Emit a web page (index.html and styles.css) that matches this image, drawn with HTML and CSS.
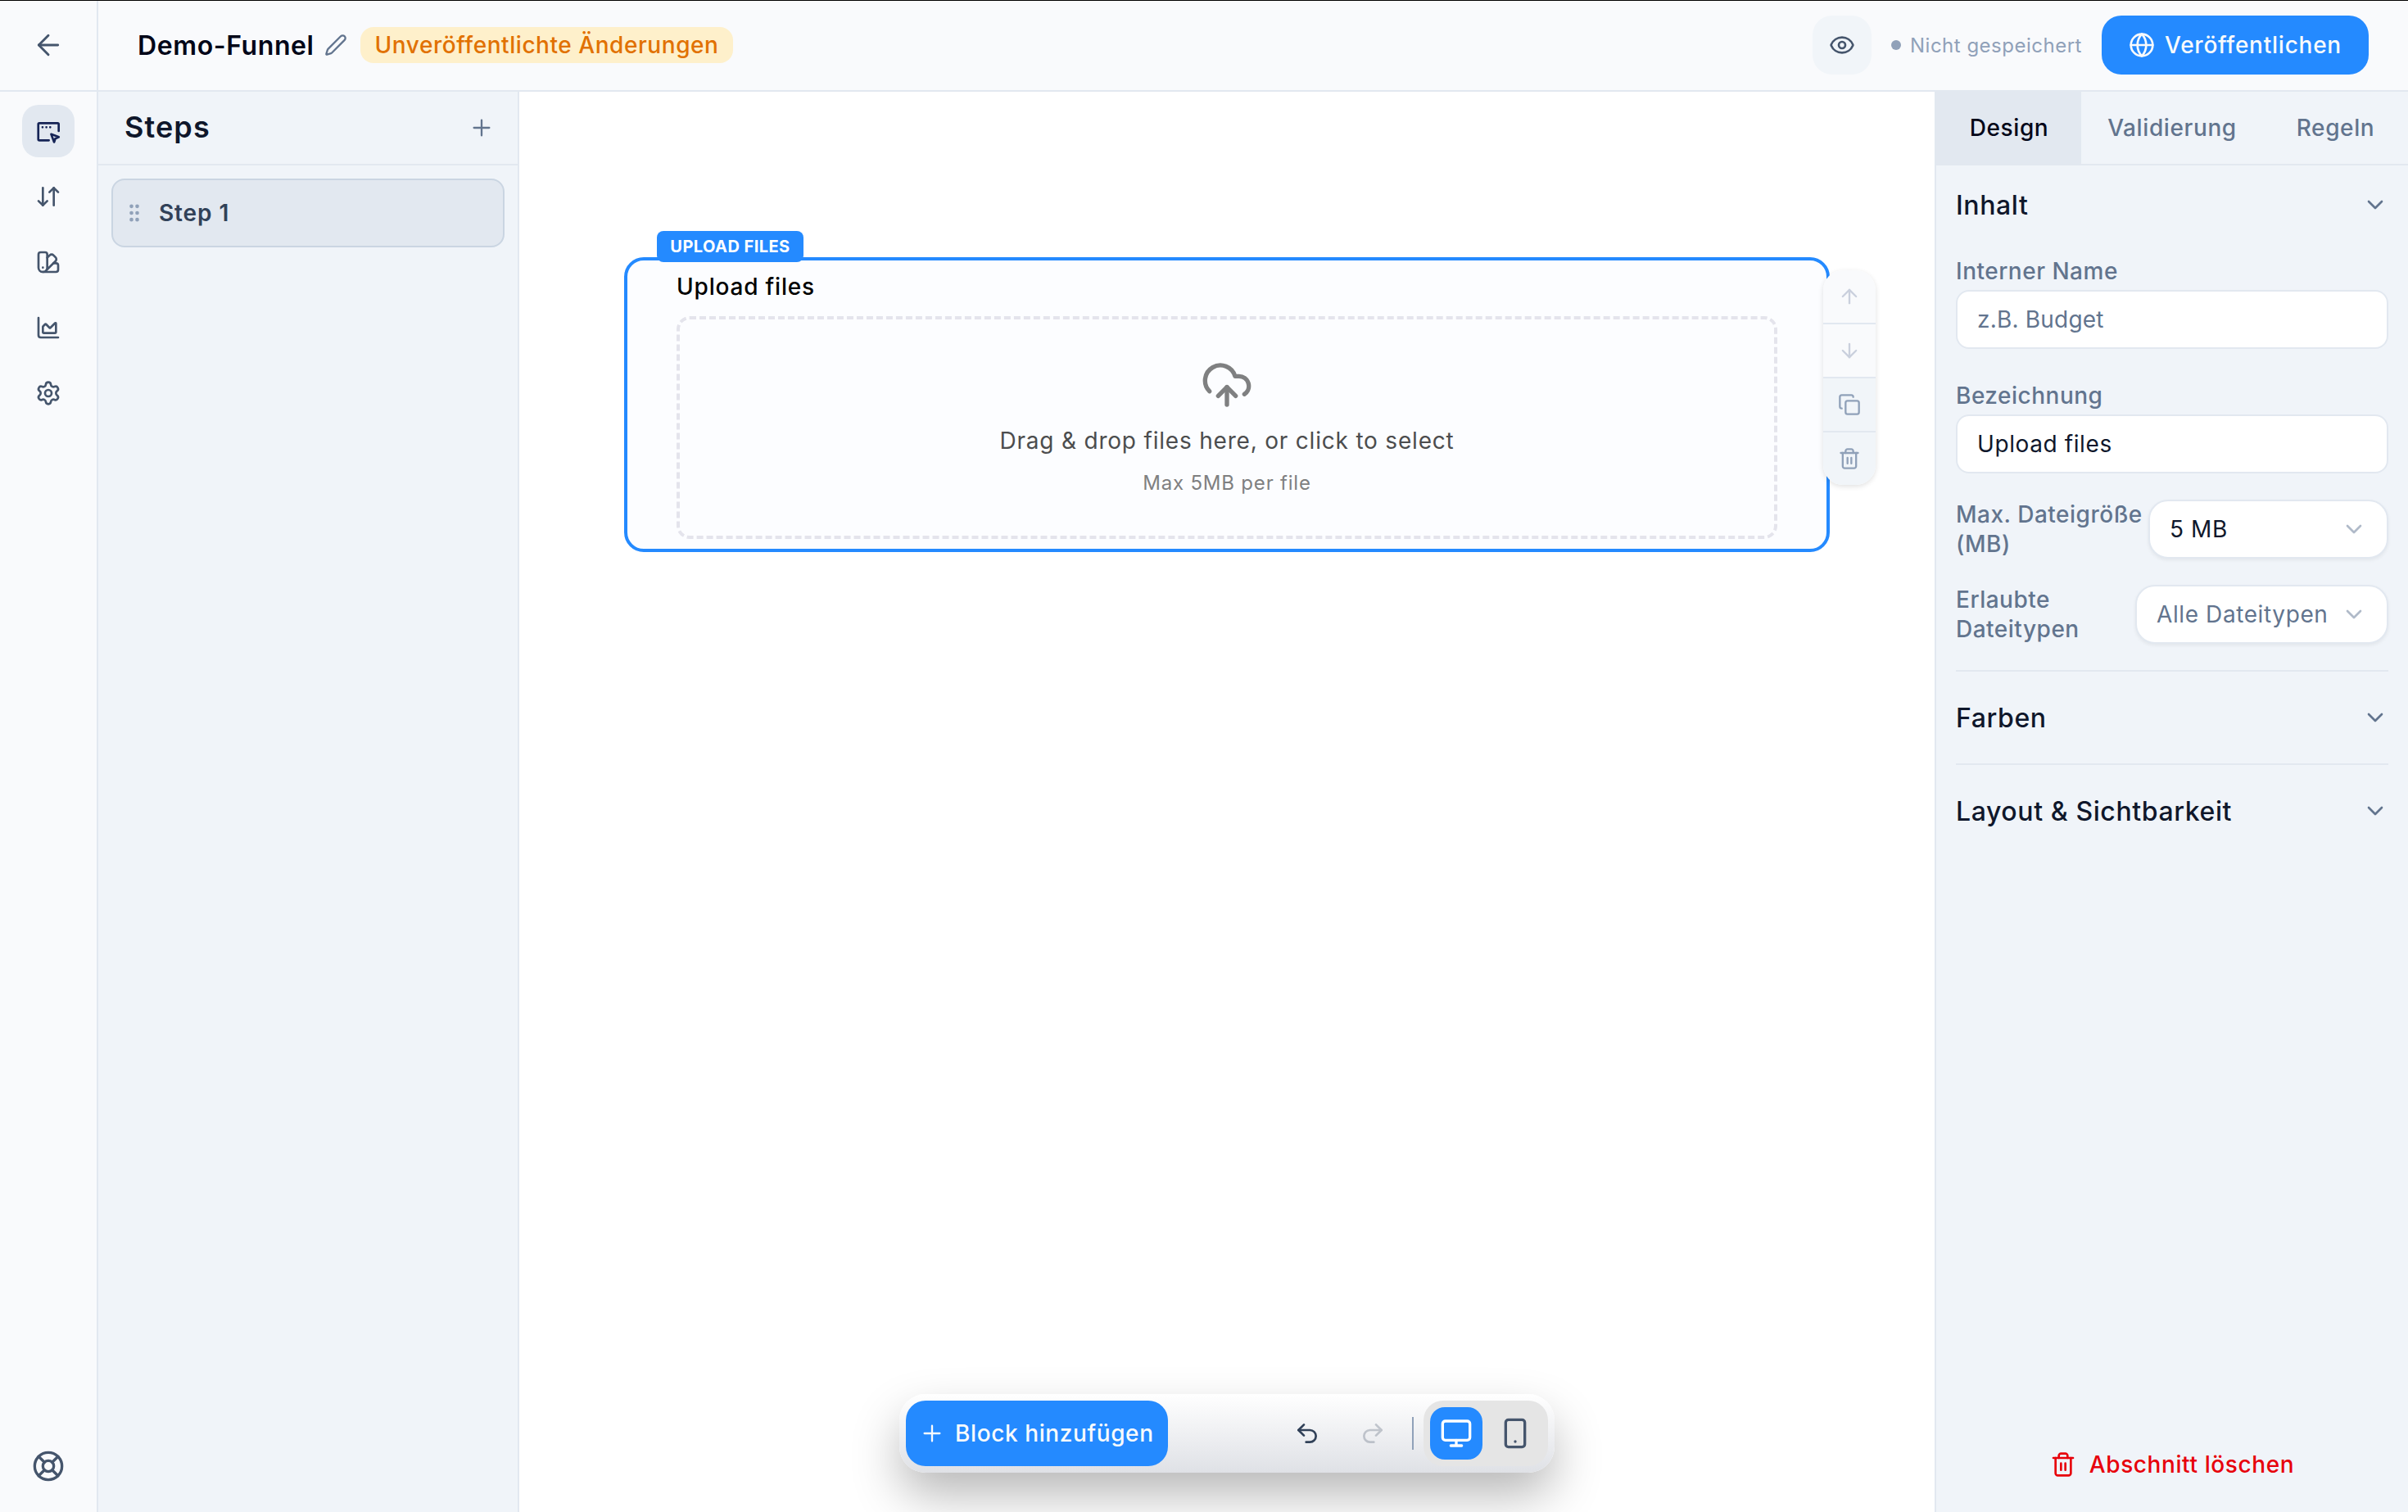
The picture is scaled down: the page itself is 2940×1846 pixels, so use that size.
FILE: index.html
```
<!DOCTYPE html>
<html lang="de">
<head>
  <meta charset="UTF-8">
  <title>Demo-Funnel</title>
  <link rel="stylesheet" href="styles.css">
</head>
<body>

  <header class="topbar">
    <div class="back">
      <svg class="icon i40 thin" viewBox="0 0 24 24"><path d="m12 19-7-7 7-7"/><path d="M19 12H5"/></svg>
    </div>
    <div class="topbar-main">
      <div class="funnel">
        <h1>Demo-Funnel</h1>
        <svg class="icon i28 pen" viewBox="0 0 24 24"><path d="M21.174 6.812a1 1 0 0 0-3.986-3.987L3.842 16.174a2 2 0 0 0-.5.83l-1.321 4.352a.5.5 0 0 0 .623.622l4.353-1.32a2 2 0 0 0 .83-.497z"/></svg>
        <span class="badge">Unveröffentlichte Änderungen</span>
      </div>
      <div class="actions">
        <button class="preview">
          <svg class="icon i32" viewBox="0 0 24 24"><path d="M2.062 12.348a1 1 0 0 1 0-.696 10.75 10.75 0 0 1 19.876 0 1 1 0 0 1 0 .696 10.75 10.75 0 0 1-19.876 0"/><circle cx="12" cy="12" r="3"/></svg>
        </button>
        <span class="status"><i class="dot"></i>Nicht gespeichert</span>
        <button class="publish">
          <svg class="icon i32" viewBox="0 0 24 24"><circle cx="12" cy="12" r="10"/><path d="M12 2a14.5 14.5 0 0 0 0 20 14.5 14.5 0 0 0 0-20"/><path d="M2 12h20"/></svg>
          Veröffentlichen
        </button>
      </div>
    </div>
  </header>

  <div class="workspace">

    <nav class="rail">
      <a class="rail-item active">
        <svg class="icon i32" viewBox="0 0 24 24"><path d="M21.5 12V5.8a1 1 0 0 0-1-1H3.8a1 1 0 0 0-1 1v13.7a1 1 0 0 0 1 1h8.7"/><path d="M6.7 8.5h.01M10.2 8.5h.01M13.7 8.5h.01"/><path d="m14.6 14.9 7 2.5-3.2 1.5-1.1 3.2z"/></svg>
      </a>
      <a class="rail-item">
        <svg class="icon i32" viewBox="0 0 24 24"><path d="m3 16 4 4 4-4"/><path d="M7 20V4"/><path d="m21 8-4-4-4 4"/><path d="M17 4v16"/></svg>
      </a>
      <a class="rail-item">
        <svg class="icon i32" viewBox="0 0 24 24"><path d="M11 17a4 4 0 0 1-8 0V5a2 2 0 0 1 2-2h4a2 2 0 0 1 2 2Z"/><path d="M16.7 13H19a2 2 0 0 1 2 2v4a2 2 0 0 1-2 2H7"/><path d="M7 17h.01"/><path d="m11 8 2.3-2.3a2.4 2.4 0 0 1 3.404.004L18.6 7.6a2.4 2.4 0 0 1 .026 3.434L9.9 19.8"/></svg>
      </a>
      <a class="rail-item">
        <svg class="icon i32" viewBox="0 0 24 24"><path d="M3 3v16a2 2 0 0 0 2 2h16"/><path d="M7 11.207a.5.5 0 0 1 .146-.353l2-2a.5.5 0 0 1 .708 0l3.292 3.292a.5.5 0 0 0 .708 0l4.292-4.292a.5.5 0 0 1 .854.353V16a1 1 0 0 1-1 1H8a1 1 0 0 1-1-1z"/></svg>
      </a>
      <a class="rail-item">
        <svg class="icon i32" viewBox="0 0 24 24"><path d="M9.671 4.136a2.34 2.34 0 0 1 4.659 0 2.34 2.34 0 0 0 3.319 1.915 2.34 2.34 0 0 1 2.33 4.033 2.34 2.34 0 0 0 0 3.831 2.34 2.34 0 0 1-2.33 4.033 2.34 2.34 0 0 0-3.319 1.915 2.34 2.34 0 0 1-4.659 0 2.34 2.34 0 0 0-3.32-1.915 2.34 2.34 0 0 1-2.33-4.033 2.34 2.34 0 0 0 0-3.831A2.34 2.34 0 0 1 6.35 6.051a2.34 2.34 0 0 0 3.319-1.915"/><circle cx="12" cy="12" r="3"/></svg>
      </a>
      <a class="rail-item help">
        <svg class="icon i40" viewBox="0 0 24 24"><circle cx="12" cy="12" r="10"/><path d="m4.93 4.93 4.24 4.24M14.83 9.17l4.24-4.24M14.83 14.83l4.24 4.24M9.17 14.83l-4.24 4.24"/><circle cx="12" cy="12" r="4"/></svg>
      </a>
    </nav>

    <aside class="steps">
      <div class="steps-head">
        <h2>Steps</h2>
        <svg class="icon i32 thin" viewBox="0 0 24 24"><path d="M5 12h14M12 5v14"/></svg>
      </div>
      <div class="step">
        <svg class="icon i28 grip" viewBox="0 0 24 24"><circle cx="9" cy="12" r="1"/><circle cx="9" cy="5" r="1"/><circle cx="9" cy="19" r="1"/><circle cx="15" cy="12" r="1"/><circle cx="15" cy="5" r="1"/><circle cx="15" cy="19" r="1"/></svg>
        Step 1
      </div>
    </aside>

    <main class="canvas">
      <section class="block">
        <span class="block-tag">UPLOAD FILES</span>
        <div class="block-title">Upload files</div>
        <div class="dropzone">
          <svg class="icon i64" viewBox="0 0 24 24"><path d="M12 13v8"/><path d="M4 14.899A7 7 0 1 1 15.71 8h1.79a4.5 4.5 0 0 1 2.5 8.242"/><path d="m8 17 4-4 4 4"/></svg>
          <p class="drop-text">Drag &amp; drop files here, or click to select</p>
          <p class="drop-hint">Max 5MB per file</p>
        </div>
        <div class="block-tools">
          <button class="tool disabled"><svg class="icon i28" viewBox="0 0 24 24"><path d="m5 12 7-7 7 7"/><path d="M12 19V5"/></svg></button>
          <button class="tool disabled"><svg class="icon i28" viewBox="0 0 24 24"><path d="M12 5v14"/><path d="m19 12-7 7-7-7"/></svg></button>
          <button class="tool"><svg class="icon i28" viewBox="0 0 24 24"><rect width="14" height="14" x="8" y="8" rx="2"/><path d="M4 16c-1.1 0-2-.9-2-2V4c0-1.1.9-2 2-2h10c1.1 0 2 .9 2 2"/></svg></button>
          <button class="tool"><svg class="icon i28" viewBox="0 0 24 24"><path d="M3 6h18"/><path d="M19 6v14c0 1-1 2-2 2H7c-1 0-2-1-2-2V6"/><path d="M8 6V4c0-1 1-2 2-2h4c1 0 2 1 2 2v2"/><path d="M10 11v6M14 11v6"/></svg></button>
        </div>
      </section>

      <div class="dock">
        <button class="add-block">
          <svg class="icon i32 thin" viewBox="0 0 24 24"><path d="M5 12h14M12 5v14"/></svg>
          Block hinzufügen
        </button>
        <button class="dock-btn undo"><svg class="icon i32" viewBox="0 0 24 24"><path d="M9 14 4 9l5-5"/><path d="M4 9h10.5a5.5 5.5 0 0 1 0 11H11"/></svg></button>
        <button class="dock-btn redo"><svg class="icon i32" viewBox="0 0 24 24"><path d="m15 14 5-5-5-5"/><path d="M20 9H9.5a5.5 5.5 0 0 0 0 11H13"/></svg></button>
        <span class="dock-line"></span>
        <div class="devices">
          <button class="device active"><svg class="icon i40" viewBox="0 0 24 24"><rect width="20" height="14" x="2" y="3" rx="2"/><path d="M8 21h8M12 17v4"/></svg></button>
          <button class="device"><svg class="icon i40" viewBox="0 0 24 24"><rect width="14" height="20" x="5" y="2" rx="2"/><path d="M12 18h.01"/></svg></button>
        </div>
      </div>
    </main>

    <aside class="props">
      <div class="tabs">
        <div class="tab active">Design</div>
        <div class="tab">Validierung</div>
        <div class="tab">Regeln</div>
      </div>
      <div class="props-body">
        <div class="group">
          <div class="group-head first">Inhalt <svg class="icon i32" viewBox="0 0 24 24"><path d="m6 9 6 6 6-6"/></svg></div>
          <div class="field">
            <label for="internal">Interner Name</label>
            <input id="internal" type="text" placeholder="z.B. Budget">
          </div>
          <div class="field">
            <label for="label">Bezeichnung</label>
            <input id="label" type="text" value="Upload files">
          </div>
          <div class="row">
            <label>Max. Dateigröße (MB)</label>
            <div class="select size">5 MB <svg class="icon i32" viewBox="0 0 24 24"><path d="m6 9 6 6 6-6"/></svg></div>
          </div>
          <div class="row">
            <label>Erlaubte Dateitypen</label>
            <div class="select types">Alle Dateitypen <svg class="icon i32" viewBox="0 0 24 24"><path d="m6 9 6 6 6-6"/></svg></div>
          </div>
        </div>
        <div class="group">
          <div class="group-head">Farben <svg class="icon i32" viewBox="0 0 24 24"><path d="m6 9 6 6 6-6"/></svg></div>
        </div>
        <div class="group">
          <div class="group-head">Layout &amp; Sichtbarkeit <svg class="icon i32" viewBox="0 0 24 24"><path d="m6 9 6 6 6-6"/></svg></div>
        </div>
        <button class="delete">
          <svg class="icon i32" viewBox="0 0 24 24"><path d="M3 6h18"/><path d="M19 6v14c0 1-1 2-2 2H7c-1 0-2-1-2-2V6"/><path d="M8 6V4c0-1 1-2 2-2h4c1 0 2 1 2 2v2"/><path d="M10 11v6M14 11v6"/></svg>
          Abschnitt löschen
        </button>
      </div>
    </aside>

  </div>

</body>
</html>
```
FILE: styles.css
```
* {
  box-sizing: border-box;
  margin: 0;
}
body {
  display: flex;
  flex-direction: column;
  height: 100vh;
  overflow: hidden;
  background: #fff;
  color: #0f172b;
  font-family: Inter, sans-serif;
  font-size: 28px;
  letter-spacing: 0.6px;
}
button, input {
  font: inherit;
  letter-spacing: inherit;
  color: inherit;
  border: 0;
  padding: 0;
  background: none;
}
button {
  display: flex;
  align-items: center;
  justify-content: center;
  white-space: nowrap;
}

/* icons */
.icon {
  flex: none;
  fill: none;
  stroke: currentColor;
  stroke-width: 2;
  stroke-linecap: round;
  stroke-linejoin: round;
}
.i28 { width: 28px; height: 28px; }
.i32 { width: 32px; height: 32px; }
.i40 { width: 40px; height: 40px; }
.i64 { width: 64px; height: 64px; }
.thin { stroke-width: 1.75; }

/* top bar */
.topbar {
  flex: none;
  display: flex;
  height: 112px;
  border-top: 1px solid #000;
  border-bottom: 2px solid #e2e8f0;
  background: #f9fafc;
}
.back {
  display: flex;
  align-items: center;
  justify-content: center;
  width: 120px;
  padding-bottom: 1px;
  border-right: 2px solid #e2e8f0;
  color: #45556c;
}
.topbar-main {
  flex: 1;
  display: flex;
  align-items: center;
  justify-content: space-between;
  padding: 0 48px 1px;
}
.funnel {
  display: flex;
  align-items: center;
}
h1 {
  width: 216px;
  white-space: nowrap;
  font-size: 32px;
  font-weight: 600;
  letter-spacing: 0.6px;
  color: #020618;
}
.pen {
  margin: 0 16px 0 12px;
  color: #62748e;
}
.badge {
  width: 455px;
  height: 44px;
  line-height: 44px;
  text-align: center;
  border-radius: 16px;
  background: #fef0cb;
  color: #e17100;
  font-weight: 550;
  letter-spacing: 0.55px;
}
.actions {
  display: flex;
  align-items: center;
  gap: 24px;
}
.preview {
  width: 72px;
  height: 72px;
  border-radius: 24px;
  background: #f1f5f9;
  color: #45556c;
}
.status {
  display: flex;
  align-items: center;
  gap: 11px;
  width: 233px;
  white-space: nowrap;
  font-size: 24px;
  letter-spacing: 0.5px;
  color: #90a1b9;
}
.dot {
  width: 12px;
  height: 12px;
  border-radius: 50%;
  background: #90a1b9;
}
.publish {
  gap: 12px;
  width: 326px;
  height: 72px;
  border-radius: 24px;
  background: #248aff;
  color: #f8fafc;
  font-weight: 550;
  letter-spacing: 0.75px;
}

.workspace {
  flex: 1;
  display: flex;
  min-height: 0;
}

/* icon rail */
.rail {
  display: flex;
  flex-direction: column;
  align-items: center;
  gap: 16px;
  width: 120px;
  padding: 16px 0 24px;
  border-right: 2px solid #e2e8f0;
  background: #f9fafc;
}
.rail-item {
  display: flex;
  align-items: center;
  justify-content: center;
  width: 64px;
  height: 64px;
  border-radius: 20px;
  color: #45556c;
}
.rail-item.active {
  background: #e2e8f0;
  color: #162456;
}
.help {
  margin-top: auto;
}

/* steps */
.steps {
  width: 514px;
  border-right: 2px solid #e2e8f0;
  background: #f0f4f9;
}
.steps-head {
  display: flex;
  align-items: center;
  justify-content: space-between;
  height: 90px;
  padding: 0 28px 0 32px;
  border-bottom: 2px solid #e2e8f0;
  color: #62748e;
}
h2 {
  padding-bottom: 2px;
  font-size: 36px;
  font-weight: 600;
  letter-spacing: 1.1px;
  color: #0f172b;
}
.step {
  display: flex;
  align-items: center;
  gap: 16px;
  height: 84px;
  margin: 16px;
  padding: 0 12px;
  border: 2px solid #cad5e2;
  border-radius: 16px;
  background: #e2e8f0;
  color: #314158;
  font-weight: 600;
  letter-spacing: 0.9px;
}
.grip {
  color: #90a1b9;
}

/* canvas */
.canvas {
  flex: 1;
  position: relative;
  padding-top: 202px;
}
.block {
  position: relative;
  width: 1472px;
  height: 360px;
  margin: 0 auto;
  padding: 12px 60px;
  border: 4px solid #248aff;
  border-radius: 24px;
  background: #fcfdff;
  letter-spacing: 0.8px;
}
.block-tag {
  position: absolute;
  left: 36px;
  top: -36px;
  width: 179px;
  height: 38px;
  line-height: 38px;
  text-align: center;
  border-radius: 8px;
  background: #248aff;
  color: #fff;
  font-size: 20px;
  font-weight: 700;
  letter-spacing: 0.45px;
}
.block-title {
  margin-bottom: 16px;
  line-height: 40px;
  color: #000;
  font-weight: 500;
}
.dropzone {
  display: flex;
  flex-direction: column;
  align-items: center;
  height: 272px;
  padding-top: 48px;
  border: 4px dashed #e4e4ec;
  border-radius: 16px;
  color: #7f8081;
}
.drop-text {
  margin: 16px 0 15px;
  line-height: 40px;
  color: #4c4d4e;
}
.drop-hint {
  line-height: 34px;
  font-size: 24px;
}
.block-tools {
  position: absolute;
  left: 1460px;
  top: 12px;
  width: 64px;
  border-radius: 24px;
  overflow: hidden;
  box-shadow: 0 2px 6px rgba(0, 0, 0, 0.12);
}
.tool {
  width: 64px;
  height: 66px;
  border-bottom: 2px solid #e2e8f0;
  background: #f1f5f9;
  color: #90a1b9;
}
.tool:last-child {
  height: 64px;
  border-bottom: 0;
}
.tool.disabled {
  background: #f9fafc;
  color: #cad0dd;
}

/* floating dock */
.dock {
  position: absolute;
  left: 50%;
  bottom: 48px;
  display: flex;
  align-items: center;
  gap: 16px;
  width: 800px;
  height: 96px;
  margin-left: -400px;
  padding: 8px;
  border-radius: 32px;
  background: linear-gradient(#fff, #dfe1e6);
  box-shadow: 0 28px 60px -2px rgba(0, 0, 0, 0.29);
}
.add-block {
  justify-content: flex-start;
  gap: 12px;
  width: 320px;
  height: 80px;
  padding-left: 16px;
  border-radius: 24px;
  background: #248aff;
  color: #f8fafc;
  font-weight: 550;
}
.dock-btn {
  width: 64px;
  height: 64px;
  color: #314158;
}
.undo {
  margin-left: auto;
}
.redo {
  opacity: 0.25;
}
.dock-line {
  width: 2px;
  height: 40px;
  background: #90a1b9;
}
.devices {
  display: flex;
  gap: 8px;
  margin-left: -4px;
  padding: 8px;
  border-radius: 24px;
  background: #e5e5e5;
}
.device {
  width: 64px;
  height: 64px;
  border-radius: 18px;
  color: #45556c;
}
.device.active {
  background: #248aff;
  color: #fff;
}

/* properties */
.props {
  display: flex;
  flex-direction: column;
  width: 578px;
  border-left: 2px solid #e2e8f0;
  background: #f0f4f9;
}
.tabs {
  display: grid;
  grid-template-columns: 177px 221px 178px;
  height: 90px;
  border-bottom: 2px solid #e2e8f0;
}
.tab {
  padding-left: 1px;
  line-height: 88px;
  text-align: center;
  color: #62748e;
  font-weight: 550;
}
.tab.active {
  background: #e2e8f0;
  color: #020618;
}
.props-body {
  flex: 1;
  display: flex;
  flex-direction: column;
  padding: 0 24px 22px;
}
.group + .group {
  border-top: 2px solid #e2e8f0;
}
.group-head {
  display: flex;
  align-items: center;
  justify-content: space-between;
  height: 112px;
  font-size: 32px;
  font-weight: 550;
}
.group-head.first {
  height: 96px;
  margin-bottom: 15px;
}
.group-head .icon {
  color: #62748e;
}
label {
  display: block;
  line-height: 36px;
  color: #62748e;
  font-weight: 550;
  letter-spacing: 0.5px;
}
.field + .field {
  margin-top: 39px;
}
.field input {
  width: 100%;
  height: 72px;
  margin-top: 5px;
  padding: 0 24px;
  border: 2px solid #e2e8f0;
  border-radius: 16px;
  background: #fff;
  display: block;
  letter-spacing: 0.6px;
}
.field input::placeholder {
  color: #62748e;
  letter-spacing: 0.2px;
}
.row {
  display: flex;
  align-items: center;
  justify-content: space-between;
  margin: 32px 0;
}
.row label {
  flex: 1;
}
.select {
  display: flex;
  align-items: center;
  justify-content: space-between;
  height: 72px;
  padding: 0 24px;
  border: 2px solid #e2e8f0;
  border-radius: 24px;
  background: #fff;
  box-shadow: 0 2px 4px rgba(0, 0, 0, 0.06);
  white-space: nowrap;
  letter-spacing: 0.6px;
}
.select.size {
  width: 293px;
}
.select.types {
  width: 309px;
  color: #62748e;
}
.select .icon {
  color: #b0bac9;
}
.delete {
  gap: 16px;
  height: 72px;
  margin-top: auto;
  color: #e7000b;
  font-weight: 550;
}
```
